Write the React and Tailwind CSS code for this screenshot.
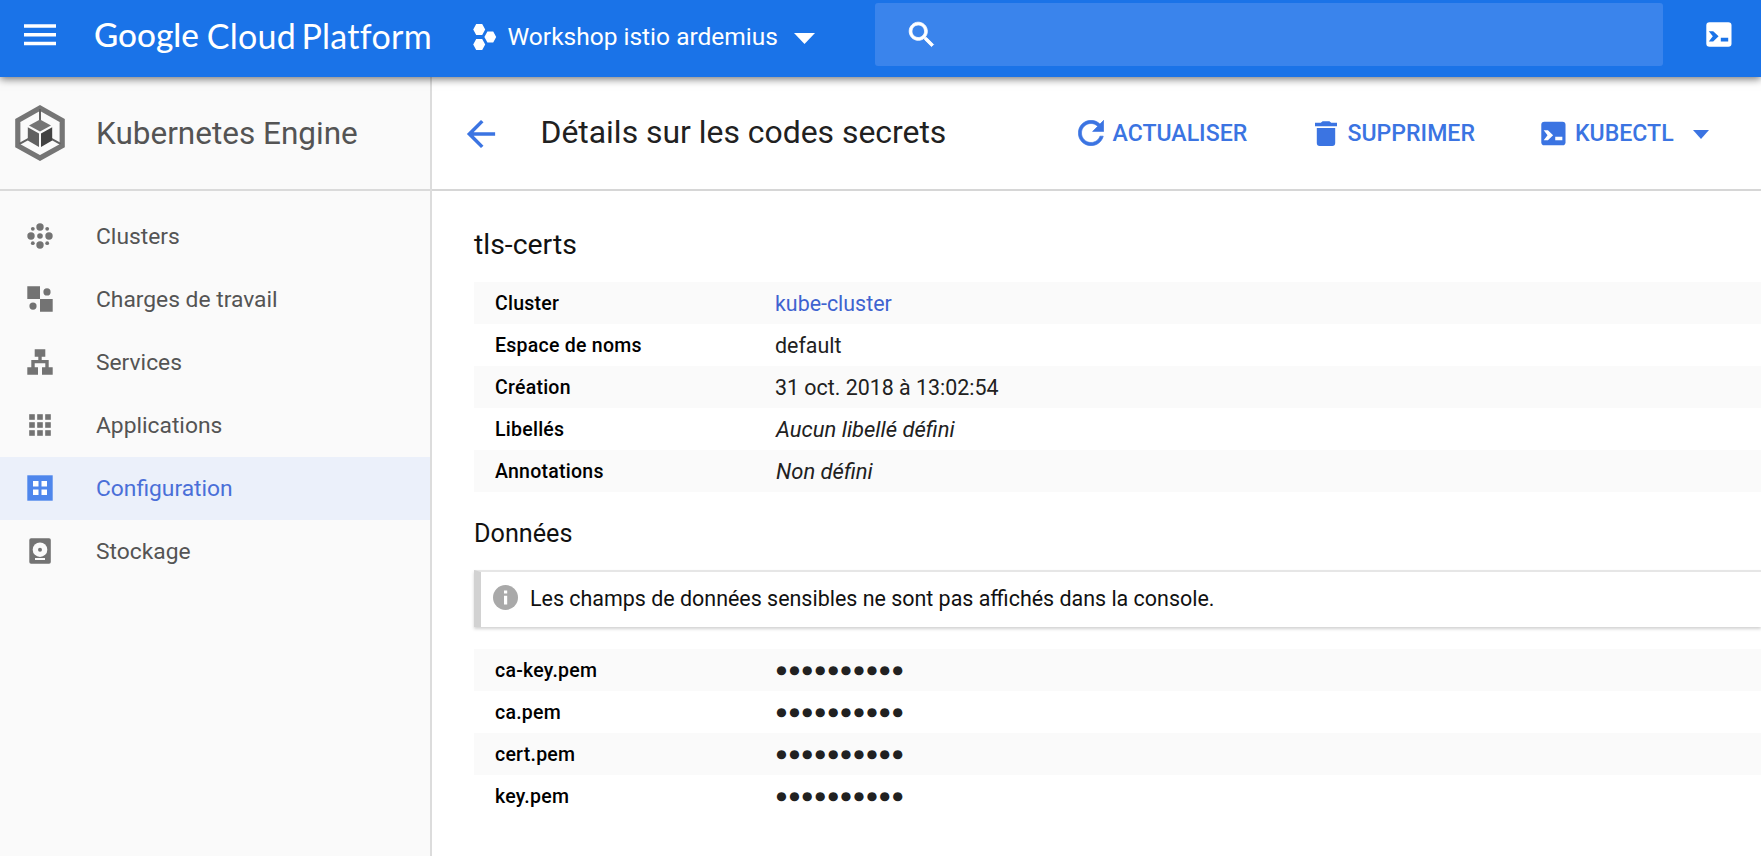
import React from "react";

function ClustersIcon() {
  return (
    <svg className="h-[26px] w-[26px]" viewBox="0 0 26 26" fill="currentColor">
      <circle cx="13" cy="4" r="3.7" />
      <circle cx="13" cy="22" r="3.7" />
      <circle cx="4" cy="13" r="3.7" />
      <circle cx="22" cy="13" r="3.7" />
      <circle cx="13" cy="13" r="2.8" />
      <circle cx="5.8" cy="5.8" r="1.9" />
      <circle cx="20.2" cy="5.8" r="1.9" />
      <circle cx="5.8" cy="20.2" r="1.9" />
      <circle cx="20.2" cy="20.2" r="1.9" />
    </svg>
  );
}

function WorkloadsIcon() {
  return (
    <svg className="h-[26px] w-[26px]" viewBox="0 0 26 26" fill="currentColor">
      <path d="M.3.3H13V13H.3zM13 13h12.7v12.7H13z" />
      <circle cx="20" cy="5.9" r="3.6" />
      <circle cx="6" cy="20.1" r="3.6" />
    </svg>
  );
}

function ServicesIcon() {
  return (
    <svg className="h-[26px] w-[26px]" viewBox="0 0 26 26" fill="currentColor">
      <path d="M7.7.3h10.6v7.4h-3.6V11h7v7.3h4v7.4H15v-7.4h3.3v-4H7.7v4H11v7.4H.3v-7.4h4V11h7V7.7H7.7z" />
    </svg>
  );
}

function ApplicationsIcon() {
  return (
    <svg className="h-[26px] w-[26px]" viewBox="0 0 26 26" fill="currentColor">
      {[2.2, 10.2, 18.2].map((y) =>
        [2.2, 10.2, 18.2].map((x) => (
          <rect key={`${x}-${y}`} x={x} y={y} width="5.6" height="5.6" />
        ))
      )}
    </svg>
  );
}

function ConfigurationIcon() {
  return (
    <svg className="h-[26px] w-[26px]" viewBox="0 0 26 26">
      <rect x=".3" y=".3" width="25.4" height="25.4" fill="#4e86ec" />
      <path d="M6 6h5.5v5.5H6zM14.5 6H20v5.5h-5.5zM6 14.5h5.5V20H6zM14.5 14.5H20V20h-5.5z" fill="#fff" />
    </svg>
  );
}

function StorageIcon() {
  return (
    <svg className="h-[26px] w-[26px]" viewBox="0 0 26 26">
      <rect x="2.3" y=".3" width="21.5" height="25.5" rx="1.8" fill="currentColor" />
      <circle cx="13" cy="11.7" r="7.3" fill="#fafafa" />
      <circle cx="13" cy="11.7" r="2" fill="currentColor" />
      <rect x="8" y="20" width="10" height="2" fill="#fafafa" />
    </svg>
  );
}

function KubernetesLogo() {
  return (
    <svg className="h-[58px] w-[50px]" viewBox="15 104 50 58">
      <path d="M40 107.9 62.2 120.5V145.7L40 158.1 17.8 145.7V120.5Z" fill="none" stroke="#757575" strokeWidth="5.2" />
      <path d="M40 109v11.5M19.5 143.8 29 138.6M60.5 143.8 51 138.6" fill="none" stroke="#616161" strokeWidth="2" />
      <path d="M40 119.6 51 125.6 40 131.4 29 125.6Z" fill="#757575" />
      <path d="M27.8 127.3 39 133.4V147L27.8 140.6Z" fill="#616161" />
      <path d="M52.2 127.3 41 133.4V147L52.2 140.6Z" fill="#424242" />
    </svg>
  );
}

function ShellIcon({ className, glyph }) {
  return (
    <svg className={className} viewBox="0 0 26 25">
      <rect x=".3" y=".2" width="25.2" height="24.6" rx="3.2" fill="currentColor" />
      <path d="M2.8 9.2h4.4l5.4 5-5.4 5.2H2.8l4-5.2zM14.8 15.8h7.4v3.6h-7.4z" className={glyph} />
    </svg>
  );
}

const navigation = [
  { label: "Clusters", icon: ClustersIcon },
  { label: "Charges de travail", icon: WorkloadsIcon },
  { label: "Services", icon: ServicesIcon },
  { label: "Applications", icon: ApplicationsIcon },
  { label: "Configuration", icon: ConfigurationIcon, active: true },
  { label: "Stockage", icon: StorageIcon },
];

const details = [
  ["Cluster", "kube-cluster", "pt-[2px] text-[21.4px] text-[#3f63d0]"],
  ["Espace de noms", "default", "pt-[2px] text-[21.4px] text-[#212121]"],
  ["Création", "31 oct. 2018 à 13:02:54", "pt-[2px] text-[21.4px] text-[#212121]"],
  ["Libellés", "Aucun libellé défini", "pl-px text-[22px] text-[#212121] italic"],
  ["Annotations", "Non défini", "pl-px text-[22px] text-[#212121] italic"],
];

const secrets = ["ca-key.pem", "ca.pem", "cert.pem", "key.pem"];

function Row({ label, children, valueClass }) {
  return (
    <div className="flex h-[42px] items-center pl-[21px] odd:bg-[#fafafa]">
      <dt className="w-[280px] shrink-0 pt-[2px] text-[19.5px] font-medium tracking-[0.25px] text-black">{label}</dt>
      <dd className={`whitespace-nowrap ${valueClass}`}>{children}</dd>
    </div>
  );
}

function Header() {
  return (
    <header className="relative z-10 flex h-[77px] shrink-0 bg-[#1a73e8] text-white shadow-[0_2px_8px_rgba(0,0,0,0.55)]">
      <button className="mt-[24px] ml-[24px] h-[22px] w-[32px]" aria-label="Menu">
        <svg className="h-[22px] w-[32px]" viewBox="0 0 32 22" fill="currentColor">
          <path d="M0 .2h32v3.5H0zM0 9h32v3.5H0zM0 17.8h32v3.5H0z" />
        </svg>
      </button>
      <div className="flex h-[70px] w-[376px] shrink-0 items-center pl-[38px] font-[Lato] text-[34px] whitespace-nowrap">
        <span className="w-[113px] text-[33.3px] font-medium">Google</span>
        <span className="w-[95px] tracking-[0.3px]">Cloud</span>
        <span className="tracking-[0.3px]">Platform</span>
      </div>
      <button className="flex h-[74px] w-[443px] shrink-0 items-center pl-[41px] text-[24.5px]">
        <svg className="h-[28px] w-[24px]" viewBox="0 0 24 28" fill="currentColor">
          <path d="M3.2 1h6l3 5.5-3 5.5h-6l-3-5.5zM3.2 16h6l3 5.5-3 5.5h-6l-3-5.5zM14.4 8.4h5.8l3 5.6-3 5.6h-5.8l-3-5.6z" />
        </svg>
        <span className="ml-[10.5px] whitespace-nowrap">Workshop istio ardemius</span>
        <svg className="mt-[3px] ml-[16.5px] h-[11px] w-[21px]" viewBox="0 0 21 11" fill="currentColor">
          <path d="M0 0h21L10.5 11z" />
        </svg>
      </button>
      <div className="mt-[3px] h-[63px] w-[788px] shrink-0 rounded-[3px] bg-[#3a84ec] pt-[15px] pl-[30px]">
        <svg className="h-[33.5px] w-[33.5px]" viewBox="0 0 24 24" fill="currentColor">
          <path
            stroke="currentColor"
            strokeWidth=".6"
            d="M15.5 14h-.79l-.28-.27C15.41 12.59 16 11.11 16 9.5 16 5.91 13.09 3 9.5 3S3 5.91 3 9.5 5.91 16 9.5 16c1.61 0 3.09-.59 4.23-1.57l.27.28v.79l5 4.99L20.49 19l-4.99-5zm-6 0C7.01 14 5 11.99 5 9.5S7.01 5 9.5 5 14 7.01 14 9.5 11.99 14 9.5 14z"
          />
        </svg>
      </div>
      <button className="mt-[22px] ml-[43px] h-[25px]" aria-label="Cloud Shell">
        <ShellIcon className="h-[25px] w-[26px]" glyph="fill-[#1a73e8]" />
      </button>
    </header>
  );
}

function Sidebar() {
  return (
    <aside className="flex w-[432px] shrink-0 flex-col border-r-2 border-[#dcdcdc] bg-[#fafafa]">
      <div className="flex h-[114px] items-center border-b-2 border-[#dadada] pl-[15px]">
        <KubernetesLogo />
        <h2 className="ml-[31px] pt-[2px] text-[31.5px] text-[#545454]">Kubernetes Engine</h2>
      </div>
      <nav className="pt-[14px]">
        {navigation.map(({ label, icon: Icon, active }) => (
          <a
            key={label}
            className={`flex h-[63px] items-center pb-px pl-[27px] text-[22.8px] ${
              active ? "bg-[#ebf0fa] text-[#4a6fd8]" : "text-[#545454]"
            }`}
          >
            <span className={active ? "" : "text-[#737373]"}>
              <Icon />
            </span>
            <span className="ml-[43px] pt-[2px]">{label}</span>
          </a>
        ))}
      </nav>
    </aside>
  );
}

function Toolbar() {
  return (
    <div className="flex h-[114px] shrink-0 items-center border-b-2 border-[#d6d6d6] pl-[34px] text-[23.1px] font-medium text-[#3b74e2]">
      <svg className="mt-[2px] h-[30px] w-[30px]" viewBox="3.5 3.5 17 17" fill="currentColor">
        <path d="M20 11H7.83l5.59-5.59L12 4l-8 8 8 8 1.41-1.41L7.83 13H20v-2z" />
      </svg>
      <h1 className="ml-[44.5px] w-[537px] text-[31.9px] font-normal whitespace-nowrap text-[#212121]">
        Détails sur les codes secrets
      </h1>
      <button className="flex w-[237px] items-center">
        <svg className="mt-px h-[26px] w-[26px]" viewBox="3.8 3.8 16.4 16.4" fill="currentColor">
          <path
            stroke="currentColor"
            strokeWidth=".4"
            d="M17.65 6.35C16.2 4.9 14.21 4 12 4c-4.42 0-7.99 3.58-7.99 8s3.57 8 7.99 8c3.73 0 6.84-2.55 7.73-6h-2.08c-.82 2.33-3.04 4-5.65 4-3.31 0-6-2.69-6-6s2.69-6 6-6c1.66 0 3.14.69 4.22 1.78L13 11h7V4l-2.35 2.35z"
          />
        </svg>
        <span className="ml-[9px] pt-[2px]">ACTUALISER</span>
      </button>
      <button className="flex w-[226px] items-center">
        <svg className="mt-px h-[25px] w-[22px]" viewBox="0 0 22 25" fill="currentColor">
          <path d="M0 1.7h5.8L7.6.2h6.8l1.8 1.5H22v3.5H0zM1.8 7h18.4v15a2.9 2.9 0 0 1-2.9 2.9H4.7A2.9 2.9 0 0 1 1.8 22z" />
        </svg>
        <span className="ml-[11px] pt-[2px]">SUPPRIMER</span>
      </button>
      <button className="flex items-center">
        <ShellIcon className="mt-px h-[25px] w-[25px]" glyph="fill-white" />
        <span className="ml-[9.5px] pt-[2px]">KUBECTL</span>
        <svg className="mt-[4px] ml-[19.5px] h-[9px] w-[16px]" viewBox="0 0 16 9" fill="currentColor">
          <path d="M0 0h16L8 9z" />
        </svg>
      </button>
    </div>
  );
}

export default function App() {
  return (
    <div className="flex h-[856px] w-[1761px] flex-col overflow-hidden bg-white font-[Roboto,sans-serif]">
      <Header />
      <div className="flex min-h-0 grow">
        <Sidebar />
        <main className="flex min-w-0 grow flex-col">
          <Toolbar />
          <div className="pl-[42px]">
            <h3 className="pt-[34px] text-[28.4px] leading-[40px] text-[#111]">tls-certs</h3>
            <dl className="mt-[17px]">
              {details.map(([label, value, valueClass]) => (
                <Row key={label} label={label} valueClass={valueClass}>
                  {value}
                </Row>
              ))}
            </dl>
            <h3 className="mt-[22px] text-[25.2px] leading-[40px] text-[#111]">Données</h3>
            <div className="mt-[16px] flex h-[57px] items-center border-t-2 border-l-[7px] border-t-[#e6e6e6] border-l-[#d2d2d2] bg-white pl-[12px] shadow-[0_2px_3px_rgba(0,0,0,0.18)]">
              <svg className="mb-[4px] h-[25px] w-[25px]" viewBox="0 0 25 25">
                <circle cx="12.5" cy="12.5" r="12.5" fill="#a9a9a9" />
                <path d="M11 5.4h3.2v3H11zM11 10.8h3.2v8.6H11z" fill="#fff" />
              </svg>
              <p className="mb-px ml-[12px] text-[21.45px] text-[#111]">
                Les champs de données sensibles ne sont pas affichés dans la console.
              </p>
            </div>
            <dl className="mt-[22px]">
              {secrets.map((name) => (
                <Row key={name} label={name} valueClass="text-[21.4px] text-[#212121]">
                  ●●●●●●●●●●
                </Row>
              ))}
            </dl>
          </div>
        </main>
      </div>
    </div>
  );
}
